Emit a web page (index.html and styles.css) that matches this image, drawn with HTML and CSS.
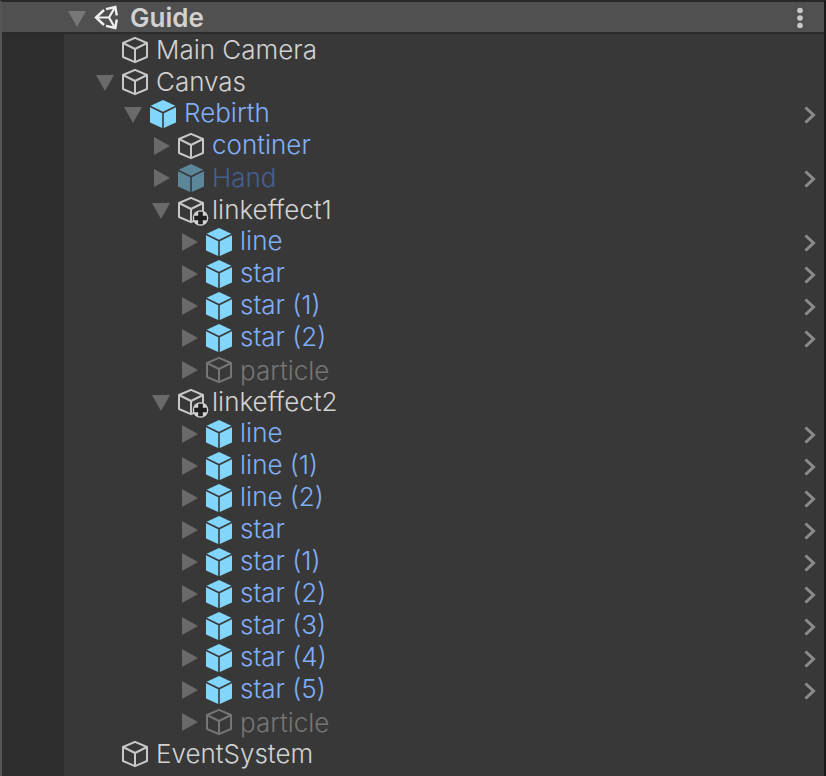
FILE: index.html
```
<!DOCTYPE html>
<html lang="en">
<head>
    <meta charset="UTF-8">
    <meta name="viewport" content="width=device-width, initial-scale=1.0">
    <title>Hierarchy</title>
    <link rel="stylesheet" href="styles.css">
</head>
<body>
    <!-- Shared icons -->
    <svg class="sprite" aria-hidden="true">
        <symbol id="down" viewBox="0 0 18 18"><path d="M0 2h18L9 18z" fill="currentColor"/></symbol>
        <symbol id="right" viewBox="0 0 18 18"><path d="M2 0v18L18 9z" fill="currentColor"/></symbol>
        <symbol id="cube" viewBox="0 0 28 28">
            <path d="M14 1.8 26 7v14L14 26.2 2 21V7zM2 7l12 6L26 7M14 13v13" fill="none" stroke="currentColor" stroke-width="2" stroke-linejoin="round"/>
        </symbol>
        <symbol id="prefab" viewBox="0 0 28 28">
            <path d="M14 0 26.3 5.7 14 11.7 1.7 5.7zM1 7.3 13.2 13.3V28L1 22.4zM27 7.3 14.8 13.3V28L27 22.4z" fill="currentColor"/>
        </symbol>
        <symbol id="added" viewBox="0 0 32 32">
            <path d="M14 3.8 26 9v14L14 28.2 2 23V9zM2 9l12 6L26 9M14 15v13" fill="none" stroke="currentColor" stroke-width="2" stroke-linejoin="round"/>
            <circle cx="23.5" cy="24" r="7.8" fill="#d2d2d2"/>
            <path d="M21.2 17.7h4.600v4h4v4.600h-4v4h-4.600v-4h-4v-4.600h4z" fill="#202020"/>
        </symbol>
        <symbol id="open" viewBox="0 0 12 18"><path d="M1.5 1.5 9.5 9l-8 7.5" fill="none" stroke="currentColor" stroke-width="3"/></symbol>
    </svg>

    <div class="panel">
        <header class="scene">
            <button class="toggle" aria-label="Collapse Guide"><svg><use href="#down"/></svg></button>
            <svg class="logo" viewBox="0 0 26 26" fill="none" stroke="#f0f0f0" stroke-width="2.4">
                <path d="M12 4.2 21.3 2 22.8 10.500M22.8 14.500 21.3 23 12 20.800M10 20 2 12.500 10 5"/>
                <path d="M2.5 12.500H15M15 12.500 20.800 2.500M15 12.500 20.800 22.500" stroke-width="2.2"/>
            </svg>
            <h1>Guide</h1>
            <button class="more" aria-label="Scene menu">
                <svg viewBox="0 0 6 22" fill="#c8c8c8"><circle cx="3" cy="3.5" r="2.8"/><circle cx="3" cy="11" r="2.8"/><circle cx="3" cy="18.5" r="2.8"/></svg>
            </button>
        </header>

        <main class="hierarchy">
            <ul class="tree" id="tree"></ul>
        </main>
    </div>

    <script src="tree.js"></script>
</body>
</html>
```
FILE: styles.css
```
* {
    box-sizing: border-box;
}

body {
    margin: 0;
    background: #383838;
    color: #d2d2d2;
    font-family: Inter, "Liberation Sans", sans-serif;
    font-size: 26px;
    font-weight: 300;
    line-height: 32px;
}

.sprite {
    display: none;
}

.panel {
    display: flex;
    flex-direction: column;
    min-height: 100vh;
    border-top: 2px solid #282828;
    border-right: 2px solid #191919;
    border-left: 2px solid #555555;
}

button {
    display: flex;
    padding: 0;
    border: 0;
    background: none;
    color: #6a6a6a;
    cursor: pointer;
}

.scene {
    display: flex;
    align-items: center;
    height: 32px;
    padding-top: 2px;
    padding-right: 21px;
    padding-left: 66px;
    border-bottom: 2px solid #2b2b2b;
    background: #505050;
}

.scene .toggle {
    color: #777777;
}

.scene h1 {
    margin: 0 auto 0 10px;
    font-size: 26px;
    font-weight: 600;
    line-height: 30px;
}

.logo {
    width: 26px;
    height: 26px;
    margin-left: 8px;
}

.more svg {
    width: 6px;
    height: 22px;
}

.hierarchy {
    flex: 1;
    padding-left: 62px;
    background: linear-gradient(to right, #2d2d2d 62px, #383838 62px);
}

.tree,
.tree ul {
    margin: 0;
    padding: 0;
    list-style: none;
}

.tree {
    padding-left: 32px;
}

.tree ul {
    padding-left: 28px;
}

.row {
    display: flex;
    align-items: center;
    height: 32px;
    padding-right: 8px;
}

.toggle,
.toggle svg {
    width: 18px;
    height: 18px;
}

.icon {
    width: 28px;
    height: 28px;
    margin-left: 7px;
    color: #c8c8c8;
}

.leaf .icon {
    margin-left: 25px;
}

.added .icon {
    width: 32px;
    height: 32px;
    margin-right: -4px;
}

.name {
    margin-right: auto;
    margin-left: 7px;
}

.prefab .icon {
    color: #80d6fd;
}

.prefab .name,
.child .name {
    padding-bottom: 2px;
    color: #80aff8;
}

.off .icon {
    color: #757575;
}

.off .name {
    padding-top: 2px;
    color: #757575;
}

.prefab.off .icon {
    color: #5c879a;
}

.prefab.off .name {
    padding: 0;
    color: #455f93;
}

.open {
    padding-top: 2px;
    color: #8c8c8c;
}

.open svg {
    width: 12px;
    height: 18px;
}
```
FILE: tree.js
```
const stars = (count) => Array.from({ length: count }, (_, i) => (
    { name: i ? `star (${i})` : 'star', type: 'prefab', closed: true }
));

const lines = (count) => Array.from({ length: count }, (_, i) => (
    { name: i ? `line (${i})` : 'line', type: 'prefab', closed: true }
));

const particle = { name: 'particle', type: 'off', closed: true };

const scene = [
    { name: 'Main Camera' },
    { name: 'Canvas', children: [
        { name: 'Rebirth', type: 'prefab', children: [
            { name: 'continer', type: 'child', closed: true },
            { name: 'Hand', type: 'prefab off', closed: true },
            { name: 'linkeffect1', type: 'added', children: [...lines(1), ...stars(3), particle] },
            { name: 'linkeffect2', type: 'added', children: [...lines(3), ...stars(6), particle] }
        ] }
    ] },
    { name: 'EventSystem' }
];

function icon(id, className) {
    return `<svg class="${className}"><use href="#${id}"/></svg>`;
}

function renderItem(item) {
    const type = item.type || '';
    const isPrefab = type.includes('prefab');
    const isLeaf = !item.closed && !item.children;
    const shape = isPrefab ? 'prefab' : type === 'added' ? 'added' : 'cube';
    let html = `<li><div class="row ${type} ${isLeaf ? 'leaf' : ''}">`;

    if (!isLeaf) {
        html += `<button class="toggle" aria-label="Toggle ${item.name}">${icon(item.closed ? 'right' : 'down', '')}</button>`;
    }
    html += icon(shape, 'icon') + `<span class="name">${item.name}</span>`;
    if (isPrefab) {
        html += `<button class="open" aria-label="Open ${item.name}">${icon('open', '')}</button>`;
    }
    html += '</div>';

    if (item.children) {
        html += `<ul>${item.children.map(renderItem).join('')}</ul>`;
    }
    return html + '</li>';
}

document.getElementById('tree').innerHTML = scene.map(renderItem).join('');
```
